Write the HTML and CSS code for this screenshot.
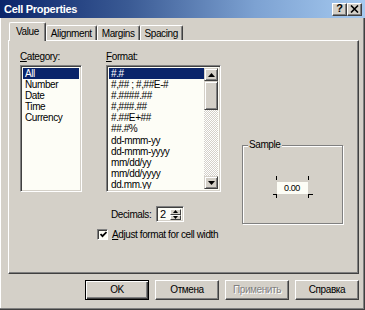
FILE: index.html
```html
<!DOCTYPE html>
<html>
<head>
<meta charset="utf-8">
<link rel="stylesheet" href="styles.css">
</head>
<body>
<div class="window">
  <div class="titlebar">
    <span class="title">Cell Properties</span>
    <div class="title-buttons">
      <span class="tbtn help">?</span>
      <span class="tbtn close"><svg width="9" height="8" viewBox="0 0 9 8"><path d="M1 0.5 L8 7.5 M8 0.5 L1 7.5" stroke="#000" stroke-width="1.6" fill="none"/></svg></span>
    </div>
  </div>
  <div class="tabs">
    <div class="tab active">Value</div>
    <div class="tab">Alignment</div>
    <div class="tab">Margins</div>
    <div class="tab">Spacing</div>
  </div>
  <div class="panel">
    <div class="col-cat">
      <div class="label"><u>C</u>ategory:</div>
      <div class="listbox cat-list">
        <div class="item sel">All</div>
        <div class="item">Number</div>
        <div class="item">Date</div>
        <div class="item">Time</div>
        <div class="item">Currency</div>
      </div>
    </div>
    <div class="col-fmt">
      <div class="label"><u>F</u>ormat:</div>
      <div class="listbox fmt-list">
        <div class="items">
          <div class="item sel">#.#</div>
          <div class="item">#,## ; #,##E-#</div>
          <div class="item">#.####.##</div>
          <div class="item">#,###.##</div>
          <div class="item">#.##E+##</div>
          <div class="item">##.#%</div>
          <div class="item">dd-mmm-yy</div>
          <div class="item">dd-mmm-yyyy</div>
          <div class="item">mm/dd/yy</div>
          <div class="item">mm/dd/yyyy</div>
          <div class="item">dd.mm.yy</div>
        </div>
        <div class="scrollbar">
          <div class="sbtn"><svg width="7" height="4" viewBox="0 0 7 4"><path d="M3.5 0 L7 4 L0 4 Z" fill="#000"/></svg></div>
          <div class="thumb"></div>
          <div class="track"></div>
          <div class="sbtn"><svg width="7" height="4" viewBox="0 0 7 4"><path d="M0 0 L7 0 L3.5 4 Z" fill="#000"/></svg></div>
        </div>
      </div>
      <div class="decimals-row">
        <span class="dec-label">Decimals:</span>
        <div class="spin">
          <span class="spin-val">2</span>
          <div class="spin-btns">
            <div class="spin-btn"><svg width="5" height="3" viewBox="0 0 5 3"><path d="M2.5 0 L5 3 L0 3 Z" fill="#000"/></svg></div>
            <div class="spin-btn"><svg width="5" height="3" viewBox="0 0 5 3"><path d="M0 0 L5 0 L2.5 3 Z" fill="#000"/></svg></div>
          </div>
        </div>
      </div>
      <div class="check-row">
        <span class="checkbox"><svg width="7" height="7" viewBox="0 0 7 7"><path d="M0.5 3 L2.5 5.2 L6.5 1" stroke="#000" stroke-width="1.8" fill="none"/></svg></span>
        <span class="check-label"><u>A</u>djust format for cell width</span>
      </div>
    </div>
    <div class="col-sample">
      <div class="group">
        <span class="legend">Sample</span>
        <div class="sample-frame">
          <div class="sample-box">0.00</div>
          <svg class="marks" width="41" height="22" viewBox="0 0 41 22">
            <rect x="3" y="0" width="1" height="4" fill="#000"/>
            <rect x="35" y="0" width="1" height="4" fill="#000"/>
            <rect x="0" y="18" width="4" height="1" fill="#000"/>
            <rect x="3" y="18" width="1" height="4" fill="#000"/>
            <rect x="35" y="18" width="5" height="1" fill="#000"/>
            <rect x="35" y="18" width="1" height="4" fill="#000"/>
          </svg>
        </div>
      </div>
    </div>
  </div>
  <div class="buttons">
    <div class="btn default"><span>OK</span></div>
    <div class="btn"><span>Отмена</span></div>
    <div class="btn disabled"><span>Применить</span></div>
    <div class="btn"><span>Справка</span></div>
  </div>
</div>
</body>
</html>
```

FILE: styles.css
```css
* { box-sizing: border-box; }
html, body { margin: 0; padding: 0; }
body {
  width: 365px;
  height: 310px;
  overflow: hidden;
  background: #d4d0c8;
  font-family: "Liberation Sans", Arial, sans-serif;
  font-size: 10px;
  letter-spacing: -0.4px;
  color: #000;
}
u { text-decoration: underline; text-underline-offset: 1px; }

.window {
  width: 365px;
  height: 310px;
  background: #d4d0c8;
  box-shadow: inset -1px -1px #404040, inset -2px -2px #808080, inset 1px 0 #fff;
}

.titlebar {
  height: 18px;
  display: flex;
  align-items: center;
  justify-content: space-between;
  padding: 0 3px 0 4px;
  background: linear-gradient(to right, #0a246a 0%, #3a5a94 35%, #7da2d2 70%, #a6caf0 100%);
}
.title {
  color: #fff;
  font-weight: bold;
  font-size: 11px;
  letter-spacing: -0.3px;
  line-height: 18px;
}
.title-buttons { display: flex; }
.tbtn {
  width: 15px;
  height: 13px;
  display: flex;
  align-items: center;
  justify-content: center;
  background: #d4d0c8;
  border: 1px solid;
  border-color: #fff #404040 #404040 #fff;
  box-shadow: inset -1px -1px #808080;
  font-weight: bold;
  font-size: 11px;
  letter-spacing: 0;
  line-height: 1;
}
.help { padding-bottom: 1px; }

.tabs {
  display: flex;
  align-items: flex-end;
  height: 22px;
  padding-left: 9px;
}
.tab {
  height: 15px;
  padding: 2px 4px 0 4px;
  border-top: 1px solid #fff;
  border-left: 1px solid #fff;
  border-right: 1px solid #404040;
  box-shadow: inset -1px 0 #808080;
  border-radius: 2px 2px 0 0;
  line-height: 11px;
  white-space: nowrap;
}
.tab.active {
  height: 19px;
  margin-bottom: -1px;
  padding: 3px 6px 0 6px;
  position: relative;
  z-index: 1;
  background: #d4d0c8;
}

.panel {
  margin-left: 8px;
  width: 351px;
  height: 234px;
  border-top: 1px solid #fff;
  border-left: 1px solid #fff;
  border-right: 1px solid #404040;
  border-bottom: 1px solid #404040;
  box-shadow: inset -1px -1px #808080;
  display: flex;
  align-items: flex-start;
  padding: 10px 0 0 11px;
}

.label {
  line-height: 12px;
  height: 12px;
  margin-bottom: 2px;
}

.listbox {
  background: #fdfdf6;
  border: 1px solid;
  border-color: #808080 #fff #fff #808080;
  box-shadow: inset 1px 1px #404040, inset -1px -1px #d4d0c8;
  padding: 2px;
  height: 127px;
}
.item {
  line-height: 11.1px;
  height: 11.1px;
  padding-left: 2px;
  white-space: nowrap;
}
.item.sel { background: #0a246a; color: #fff; }

.cat-list { width: 62px; }

.col-fmt { margin-left: 24px; }
.fmt-list {
  width: 115px;
  display: flex;
}
.fmt-list .items { flex: 1; overflow: hidden; }
.scrollbar {
  width: 14px;
  display: flex;
  flex-direction: column;
}
.sbtn, .thumb {
  background: #d4d0c8;
  border: 1px solid;
  border-color: #d4d0c8 #404040 #404040 #d4d0c8;
  box-shadow: inset 1px 1px #fff, inset -1px -1px #808080;
}
.sbtn {
  height: 13px;
  display: flex;
  align-items: center;
  justify-content: center;
}
.thumb { height: 29px; }
.track {
  flex: 1;
  background: repeating-conic-gradient(#d4d0c8 0 25%, #fff 0 50%) 0 0 / 2px 2px;
}

.decimals-row {
  display: flex;
  align-items: center;
  margin-top: 14px;
  padding-left: 5px;
  height: 16px;
}
.dec-label { width: 45px; }
.spin {
  width: 28px;
  height: 16px;
  background: #fdfdf6;
  border: 1px solid;
  border-color: #808080 #fff #fff #808080;
  box-shadow: inset 1px 1px #404040, inset -1px -1px #d4d0c8;
  display: flex;
  padding: 2px 2px 1px 2px;
}
.spin-val {
  flex: 1;
  line-height: 11px;
  font-size: 11px;
  padding-left: 1px;
}
.spin-btns { width: 11px; display: flex; flex-direction: column; }
.spin-btn {
  flex: 1;
  background: #d4d0c8;
  border: 1px solid;
  border-color: #fff #404040 #404040 #fff;
  display: flex;
  align-items: center;
  justify-content: center;
}

.check-row {
  display: flex;
  align-items: center;
  margin-top: 6px;
  margin-left: -9px;
  height: 12px;
}
.checkbox {
  width: 11px;
  height: 11px;
  background: #fdfdf6;
  border: 1px solid;
  border-color: #808080 #fff #fff #808080;
  box-shadow: inset 1px 1px #404040;
  display: flex;
  align-items: center;
  justify-content: center;
  padding: 1px 0 0 1px;
  margin-right: 4px;
}
.check-label { white-space: nowrap; }

.col-sample { margin-left: 21px; margin-top: 94px; }
.group {
  position: relative;
  width: 101px;
  height: 79px;
  border: 1px solid #808080;
  box-shadow: inset 1px 1px #fff, 1px 1px #fff;
  display: flex;
  justify-content: center;
  padding-top: 30px;
}
.legend {
  position: absolute;
  left: 5px;
  top: -7px;
  padding: 0 1px;
  background: #d4d0c8;
  line-height: 12px;
}
.sample-frame {
  position: relative;
  width: 41px;
  height: 22px;
  padding: 6px 0 0 4px;
  margin-left: 1px;
}
.sample-box {
  width: 31px;
  height: 12px;
  background: #fdfdf6;
  line-height: 12px;
  text-align: center;
  font-size: 9px;
}
.marks { position: absolute; left: 0; top: 0; }

.buttons {
  display: flex;
  justify-content: flex-end;
  gap: 6px;
  margin-top: 6px;
  padding-right: 6px;
}
.btn {
  width: 64px;
  height: 20px;
  background: #d4d0c8;
  border: 1px solid;
  border-color: #fff #404040 #404040 #fff;
  box-shadow: inset -1px -1px #808080;
  display: flex;
  align-items: center;
  justify-content: center;
  line-height: 12px;
}
.btn.default {
  border: 1px solid #000;
  box-shadow: inset 1px 1px #fff, inset -1px -1px #404040, inset -2px -2px #808080;
}
.btn.disabled { color: #808080; text-shadow: 1px 1px #fff; }
```
